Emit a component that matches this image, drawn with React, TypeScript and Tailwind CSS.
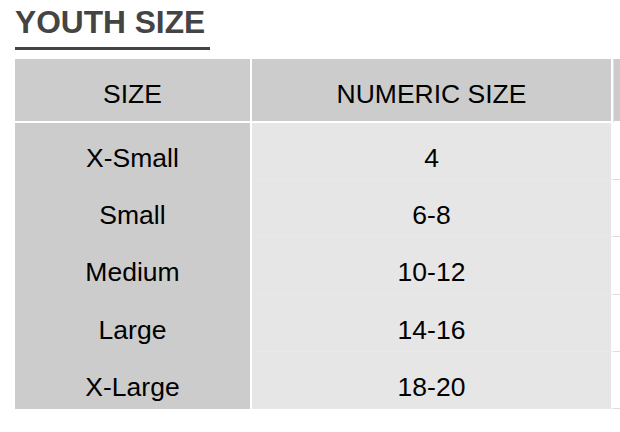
const ROWS = [
  { size: "X-Small", numeric: "4" },
  { size: "Small", numeric: "6-8" },
  { size: "Medium", numeric: "10-12" },
  { size: "Large", numeric: "14-16" },
  { size: "X-Large", numeric: "18-20" },
];

export default function App() {
  return (
    <div className="min-h-screen bg-white pl-[15px] font-['Liberation_Sans',Arial,sans-serif]">
      <h2 className="mt-[7px] w-[195px] border-b-[3px] border-[#444] pb-[9px] text-[31.7px] leading-[31px] font-bold text-[#444]">
        YOUTH SIZE
      </h2>

      <div className="mt-[9px] w-[605px] overflow-hidden">
        <table className="w-[720px] table-fixed border-separate border-spacing-0 text-center text-[26.5px] text-black">
          <colgroup>
            <col className="w-[237px]" />
            <col className="w-[361px]" />
            <col className="w-[122px]" />
          </colgroup>
          <thead>
            <tr>
              <th className="h-[64px] border-r-2 border-b-2 border-white bg-[#cccccc] pt-[20px] align-top leading-[30px] font-normal">
                SIZE
              </th>
              <th className="h-[64px] border-r-2 border-b-2 border-white bg-[#cccccc] pt-[20px] align-top leading-[30px] font-normal">
                NUMERIC SIZE
              </th>
              <th className="h-[64px] border-l border-b-2 border-l-[#e0e0e0] border-b-white bg-[#cccccc]" />
            </tr>
          </thead>
          <tbody>
            {ROWS.map((row) => (
              <tr key={row.size}>
                <td className="h-[57.2px] border-r-2 border-white bg-[#cccccc] pt-[20px] align-top leading-[30px]">
                  {row.size}
                </td>
                <td className="h-[57.2px] border-r-2 border-b border-r-white border-b-[#e9e9e9] bg-[#e6e6e6] pt-[20px] align-top leading-[30px]">
                  {row.numeric}
                </td>
                <td className="h-[57.2px] border-b border-[#dddddd] bg-white" />
              </tr>
            ))}
          </tbody>
        </table>
      </div>
    </div>
  );
}
